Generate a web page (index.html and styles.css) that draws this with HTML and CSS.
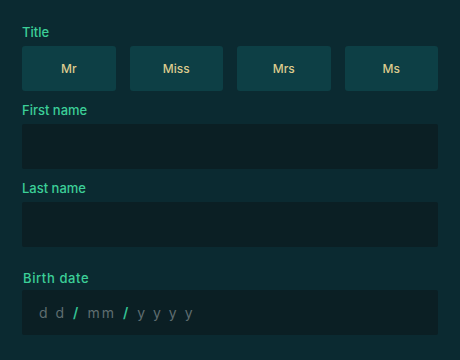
FILE: index.html
```html
<!DOCTYPE html>
<html lang="en">
  <head>
    <meta charset="utf-8">
    <title>personal details</title>
    <link rel="stylesheet" href="styles.css">
  </head>
  <body>
    <form class="details">
      <label class="field-label title-label">Title</label>
      <div class="titles">
        <button type="button">Mr</button>
        <button type="button">Miss</button>
        <button type="button">Mrs</button>
        <button type="button">Ms</button>
      </div>

      <label class="field-label">First name</label>
      <input type="text" class="text-input">

      <label class="field-label">Last name</label>
      <input type="text" class="text-input">

      <label class="field-label birth-label">Birth date</label>
      <div class="text-input date">
        <span>d d</span><span class="slash">/</span><span>mm</span><span class="slash">/</span><span>y y y y</span>
      </div>
    </form>
  </body>
</html>
```

FILE: styles.css
```css
* { box-sizing: border-box; }

body {
  margin: 0;
  background-color: #0b2a31;
  font-family: 'Inter', 'Noto Sans', sans-serif;
}

.details {
  display: flex;
  flex-direction: column;
  padding: 24px 22px 26px 22px;
}

.field-label {
  color: #3ccf98;
  font-size: 13px;
  font-weight: 500;
  line-height: 16px;
  margin-bottom: 6px;
}

.title-label {
  margin-bottom: 6px;
}

.birth-label {
  margin-top: 12px;
  margin-left: 1px;
  margin-bottom: 4px;
  letter-spacing: 0.6px;
}

.titles {
  display: grid;
  grid-template-columns: repeat(4, 1fr);
  column-gap: 14px;
  margin-bottom: 11px;
}

.titles button {
  height: 45px;
  border: none;
  border-radius: 3px;
  background-color: #0d3f45;
  color: #dccb8e;
  font-family: 'Inter', sans-serif;
  font-size: 12px;
  font-weight: 500;
  cursor: pointer;
}

.text-input {
  height: 45px;
  border: none;
  outline: none;
  border-radius: 2px;
  background-color: #0b1f24;
  margin-bottom: 11px;
  width: 100%;
}

.date {
  display: flex;
  align-items: center;
  gap: 7px;
  padding-left: 17px;
  color: #5f6d70;
  font-size: 14px;
  letter-spacing: 2px;
  margin-bottom: 0;
}

.date .slash {
  color: #33c294;
  font-weight: 600;
}
```
